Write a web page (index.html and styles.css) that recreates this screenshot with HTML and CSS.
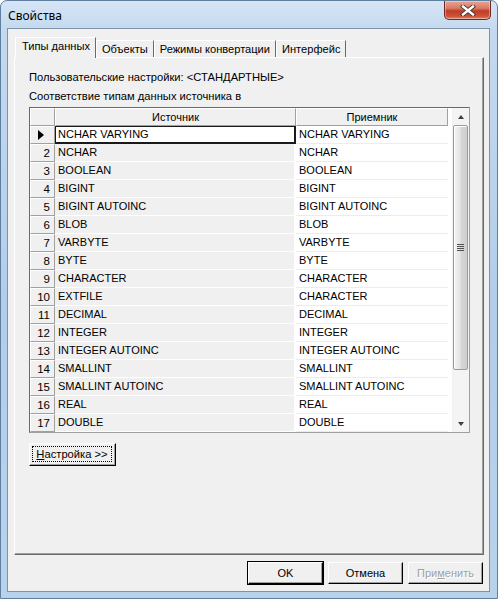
FILE: index.html
```html
<!DOCTYPE html>
<html>
<head>
<meta charset="utf-8">
<link rel="stylesheet" href="styles.css">
</head>
<body>
<div class="window">
  <div class="titlebar">
    <span class="title">Свойства</span>
    <div class="close">
      <svg width="16" height="11" viewBox="0 0 16 11"><path d="M3 1.5 L13 9.5 M13 1.5 L3 9.5" stroke="#3a3a3a" stroke-width="4.2" stroke-linecap="square"/><path d="M3 1.5 L13 9.5 M13 1.5 L3 9.5" stroke="#ffffff" stroke-width="2.4" stroke-linecap="square"/></svg>
    </div>
  </div>
  <div class="client">
    <div class="tabs">
      <div class="tab active">Типы данных</div>
      <div class="tab">Объекты</div>
      <div class="tab">Режимы конвертации</div>
      <div class="tab">Интерфейс</div>
    </div>
    <div class="panel">
      <div class="label l1">Пользовательские настройки: &lt;СТАНДАРТНЫЕ&gt;</div>
      <div class="label l2">Соответствие типам данных источника в</div>
      <div class="grid">
        <div class="table">
          <div class="row head">
            <div class="ind hcell"></div>
            <div class="c1 hcell">Источник</div>
            <div class="c2 hcell">Приемник</div>
          </div>
          <div class="row cur"><div class="ind"><span class="tri"></span></div><div class="c1">NCHAR VARYING</div><div class="c2">NCHAR VARYING</div></div>
          <div class="row"><div class="ind">2</div><div class="c1">NCHAR</div><div class="c2">NCHAR</div></div>
          <div class="row"><div class="ind">3</div><div class="c1">BOOLEAN</div><div class="c2">BOOLEAN</div></div>
          <div class="row"><div class="ind">4</div><div class="c1">BIGINT</div><div class="c2">BIGINT</div></div>
          <div class="row"><div class="ind">5</div><div class="c1">BIGINT AUTOINC</div><div class="c2">BIGINT AUTOINC</div></div>
          <div class="row"><div class="ind">6</div><div class="c1">BLOB</div><div class="c2">BLOB</div></div>
          <div class="row"><div class="ind">7</div><div class="c1">VARBYTE</div><div class="c2">VARBYTE</div></div>
          <div class="row"><div class="ind">8</div><div class="c1">BYTE</div><div class="c2">BYTE</div></div>
          <div class="row"><div class="ind">9</div><div class="c1">CHARACTER</div><div class="c2">CHARACTER</div></div>
          <div class="row"><div class="ind">10</div><div class="c1">EXTFILE</div><div class="c2">CHARACTER</div></div>
          <div class="row"><div class="ind">11</div><div class="c1">DECIMAL</div><div class="c2">DECIMAL</div></div>
          <div class="row"><div class="ind">12</div><div class="c1">INTEGER</div><div class="c2">INTEGER</div></div>
          <div class="row"><div class="ind">13</div><div class="c1">INTEGER AUTOINC</div><div class="c2">INTEGER AUTOINC</div></div>
          <div class="row"><div class="ind">14</div><div class="c1">SMALLINT</div><div class="c2">SMALLINT</div></div>
          <div class="row"><div class="ind">15</div><div class="c1">SMALLINT AUTOINC</div><div class="c2">SMALLINT AUTOINC</div></div>
          <div class="row"><div class="ind">16</div><div class="c1">REAL</div><div class="c2">REAL</div></div>
          <div class="row"><div class="ind">17</div><div class="c1">DOUBLE</div><div class="c2">DOUBLE</div></div>
        </div>
        <div class="vscroll">
          <div class="arrow"><span class="up"></span></div>
          <div class="thumb"><span class="grip"></span></div>
          <div class="track"></div>
          <div class="arrow"><span class="down"></span></div>
        </div>
      </div>
      <div class="btn setup"><span class="focus"><u>Н</u>астройка &gt;&gt;</span></div>
    </div>
    <div class="buttons">
      <div class="btn dlg def">OK</div>
      <div class="btn dlg">Отмена</div>
      <div class="btn dlg dis">При<u>м</u>енить</div>
    </div>
  </div>
</div>
</body>
</html>
```
FILE: styles.css
```css
* { box-sizing: border-box; }
html, body { margin: 0; padding: 0; background: #ffffff; }
body { width: 498px; height: 599px; overflow: hidden; font-family: "Liberation Sans", Arial, sans-serif; font-size: 11px; font-weight: normal; color: #000; }

.window {
  width: 498px; height: 599px;
  border: 1px solid #5f7fa0;
  border-radius: 7px 7px 0 0;
  background: linear-gradient(to bottom, #d5e5f5 0px, #c4d9ef 30px, #b3cde9 300px, #b9d2ec 599px);
  display: flex; flex-direction: column;
  padding: 0 7px 6px 6px;
}
.titlebar { height: 28px; display: flex; align-items: flex-start; justify-content: space-between; }
.title { font-family: "Noto Sans", "Open Sans", sans-serif; font-size: 12px; margin: 6px 0 0 1px; color: #000; }
.close {
  width: 47px; height: 19px; margin-right: -1px;
  border: 1px solid #6e2a22; border-top: none;
  border-radius: 0 0 5px 5px;
  background: linear-gradient(to bottom, #eaa394 0%, #d97a66 40%, #c23c26 55%, #cc5338 85%, #e08a6b 100%);
  display: flex; align-items: center; justify-content: center;
  box-shadow: inset 0 0 0 1px rgba(255,255,255,0.35);
}
.close svg { display: block; }

.client {
  flex: 1;
  background: #f0f0f0;
  border: 1px solid #7c92a8;
  padding: 7px 6px 7px 6px;
  display: flex; flex-direction: column;
}
.tabs { display: flex; align-items: flex-end; height: 21px; padding-left: 1px; position: relative; z-index: 2; }
.tab {
  height: 17px; padding: 0 5px;
  border: 1px solid #a0a0a0; border-bottom: none; border-right-color: #696969;
  border-left-color: #ffffff; border-top-color: #ffffff;
  background: #f0f0f0;
  line-height: 16px; white-space: nowrap; font-size: 11.1px;
}
.tab.active { height: 21px; padding: 0 5px 0 6px; margin-bottom: -1px; line-height: 17px; }

.panel {
  width: 470px; height: 498px;
  border: 1px solid; border-color: #ffffff #696969 #696969 #ffffff;
  box-shadow: inset -1px -1px 0 #a0a0a0;
  padding: 12px 0 0 14px;
  display: flex; flex-direction: column; align-items: flex-start;
}
.label { height: 14px; line-height: 14px; white-space: nowrap; font-size: 11.2px; }
.l2 { margin-top: 5px; }
.grid {
  margin-top: 4px;
  width: 441px; height: 326px;
  border: 1px solid #696969; border-right-color: #a0a0a0; border-bottom-color: #a0a0a0;
  background: #ffffff;
  display: flex;
}
.table { width: 422px; display: flex; flex-direction: column; }
.row { display: flex; height: 18px; }
.row > div { height: 18px; line-height: 17px; white-space: nowrap; overflow: hidden; }
.ind {
  width: 25px; background: #f0f0f0;
  border: 1px solid; border-color: #ffffff #a0a0a0 #a0a0a0 #ffffff;
  padding-right: 4px; font-size: 11.5px;
  display: flex; align-items: center; justify-content: flex-end;
}
.c1 { width: 241px; background: #f0f0f0; border-right: 2px solid #ffffff; border-bottom: 1px solid #ffffff; padding-left: 3px; }
.c2 { width: 152px; background: #ffffff; border-bottom: 1px solid #ececec; padding-left: 3px; }
.row.cur .c1 { background: #ffffff; border: 2px solid #1a1a1a; border-top-width: 1px; border-left-width: 1px; padding-left: 2px; line-height: 15px; }
.head .hcell { background: #f0f0f0; border: 1px solid; border-color: #ffffff #a0a0a0 #a0a0a0 #ffffff; text-align: center; padding: 0; line-height: 16px; }
.tri { width: 0; height: 0; border-top: 5px solid transparent; border-bottom: 5px solid transparent; border-left: 6px solid #000; margin-right: 6px; }

.vscroll { width: 17px; background: #f4f4f4; display: flex; flex-direction: column; border-left: 1px solid #f0f0f0; }
.arrow { height: 17px; display: flex; align-items: center; justify-content: center; }
.up { width: 0; height: 0; border-left: 3.5px solid transparent; border-right: 3.5px solid transparent; border-bottom: 4px solid #404040; }
.down { width: 0; height: 0; border-left: 3.5px solid transparent; border-right: 3.5px solid transparent; border-top: 4px solid #404040; }
.thumb {
  height: 245px; margin: 0 1px 0 0;
  border: 1px solid #9a9a9a; border-radius: 2px;
  background: linear-gradient(to right, #f4f4f4 0%, #e6e6e6 45%, #d6d6d6 55%, #cfcfcf 100%);
  box-shadow: inset 1px 1px 0 #ffffff;
  display: flex; align-items: center; justify-content: center;
}
.grip { width: 7px; height: 7px; background: repeating-linear-gradient(to bottom, #505050 0 1px, transparent 1px 2px); }
.track { flex: 1; }

.btn {
  background: #f0f0f0;
  border: 1px solid; border-color: #ffffff #000000 #000000 #ffffff;
  box-shadow: inset -1px -1px 0 #a0a0a0;
  display: flex; align-items: center; justify-content: center;
  white-space: nowrap; font-weight: normal;
}
.setup { margin-top: 10px; width: 87px; height: 23px; padding: 2px 3px 3px 2px; font-size: 11.2px; }
.setup .focus { flex: 1; align-self: stretch; border: 1px dotted #000; display: flex; align-items: center; justify-content: center; }
.buttons { display: flex; justify-content: flex-end; gap: 5px; margin-top: 7px; }
.dlg { width: 75px; height: 22px; }
.def { outline: 1px solid #000; }
.dis { color: #a0a0a0; text-shadow: 1px 1px 0 #ffffff; }
u { text-decoration: underline; }
```
